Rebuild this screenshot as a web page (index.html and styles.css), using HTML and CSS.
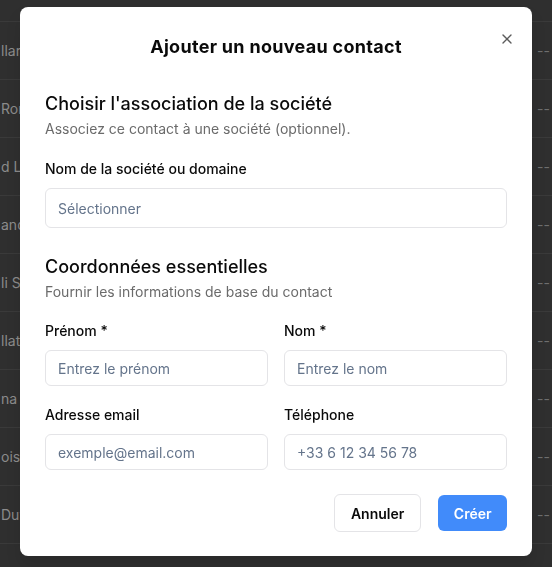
FILE: index.html
```html
<!DOCTYPE html>
<html lang="fr">
<head>
    <meta charset="UTF-8">
    <meta name="viewport" content="width=device-width, initial-scale=1.0">
    <title>Contacts</title>
    <link rel="stylesheet" href="styles.css">
</head>
<body>

    <!-- Contacts table behind the dialog -->
    <div class="table-bg">
        <div class="table-head"></div>
        <div class="table-row"><span class="cell-name">llar</span><span class="cell-empty">--</span></div>
        <div class="table-row"><span class="cell-name">Ror</span><span class="cell-empty">--</span></div>
        <div class="table-row"><span class="cell-name">d L</span><span class="cell-empty">--</span></div>
        <div class="table-row"><span class="cell-name">and</span><span class="cell-empty">--</span></div>
        <div class="table-row"><span class="cell-name">li S</span><span class="cell-empty">--</span></div>
        <div class="table-row"><span class="cell-name">llat</span><span class="cell-empty">--</span></div>
        <div class="table-row"><span class="cell-name">na C</span><span class="cell-empty">--</span></div>
        <div class="table-row"><span class="cell-name">ois</span><span class="cell-empty">--</span></div>
        <div class="table-row"><span class="cell-name">Duv</span><span class="cell-empty">--</span></div>
    </div>

    <div class="overlay">
        <div class="dialog">
            <button type="button" class="close-btn" aria-label="Fermer">
                <svg width="16" height="16" viewBox="0 0 24 24" fill="none" stroke="currentColor" stroke-width="2" stroke-linecap="round">
                    <path d="M18 6 6 18"/>
                    <path d="m6 6 12 12"/>
                </svg>
            </button>

            <h2 class="dialog-title">Ajouter un nouveau contact</h2>

            <div class="section">
                <h3>Choisir l'association de la société</h3>
                <p>Associez ce contact à une société (optionnel).</p>
            </div>

            <div class="field field-company">
                <label for="company">Nom de la société ou domaine</label>
                <div class="select" id="company">Sélectionner</div>
            </div>

            <div class="section section-details">
                <h3>Coordonnées essentielles</h3>
                <p>Fournir les informations de base du contact</p>
            </div>

            <div class="fields-grid">
                <div class="field">
                    <label for="firstName">Prénom *</label>
                    <input type="text" id="firstName" placeholder="Entrez le prénom">
                </div>
                <div class="field">
                    <label for="lastName">Nom *</label>
                    <input type="text" id="lastName" placeholder="Entrez le nom">
                </div>
                <div class="field">
                    <label for="email">Adresse email</label>
                    <input type="text" id="email" placeholder="exemple@email.com">
                </div>
                <div class="field">
                    <label for="phone">Téléphone</label>
                    <input type="text" id="phone" placeholder="+33 6 12 34 56 78">
                </div>
            </div>

            <div class="dialog-footer">
                <button type="button" class="btn btn-outline">Annuler</button>
                <button type="button" class="btn btn-primary">Créer</button>
            </div>
        </div>
    </div>

</body>
</html>
```

FILE: styles.css
```css
body {
    font-family: Inter, "Noto Sans", sans-serif;
    background-color: #2f2f2f;
    margin: 0;
    color: #0a0a0a;
}
.table-bg {
    height: 567px;
    overflow: hidden;
}
.table-head {
    height: 21px;
    border-bottom: 1px solid #3a3a3a;
}
.table-row {
    height: 57px;
    border-bottom: 1px solid #3a3a3a;
    display: flex;
    align-items: center;
    justify-content: space-between;
    padding: 0 2px 0 1px;
    font-size: 14px;
    color: #8b8b8b;
}
.cell-name {
    max-width: 19px;
    overflow: hidden;
    white-space: nowrap;
}
.cell-empty {
    color: #6e6e6e;
}
.overlay {
    position: fixed;
    inset: 0;
    display: flex;
    justify-content: center;
    align-items: flex-start;
    padding-top: 7px;
}
.dialog {
    position: relative;
    width: 512px;
    box-sizing: border-box;
    background: white;
    padding: 24px 25px;
    border-radius: 8px;
    box-shadow: 0px 10px 15px rgba(0, 0, 0, 0.1);
}
.close-btn {
    position: absolute;
    top: 24px;
    right: 17px;
    padding: 0;
    border: none;
    background: none;
    color: #3f3f3f;
    opacity: 0.85;
    cursor: pointer;
}
.dialog-title {
    margin: 0;
    font-size: 18px;
    line-height: 32px;
    font-weight: 700;
    text-align: center;
    letter-spacing: 0.3px;
}
.section {
    margin-top: 27px;
}
.section h3 {
    margin: 0;
    font-size: 18px;
    line-height: 28px;
    font-weight: 500;
}
.section p {
    margin: 1px 0 0;
    font-size: 14px;
    line-height: 20px;
    color: #6b6b6b;
}
.section-details {
    margin-top: 25px;
}
.field label {
    display: block;
    font-size: 14px;
    line-height: 20px;
    font-weight: 500;
    margin-bottom: 9px;
}
.field-company {
    margin-top: 20px;
}
.select, input[type="text"] {
    box-sizing: border-box;
    width: 100%;
    height: 36px;
    padding: 0 12px;
    border: 1px solid #e4e4e7;
    border-radius: 6px;
    font-family: inherit;
    font-size: 14px;
    color: #0a0a0a;
    background: white;
    outline: none;
}
.select {
    height: 40px;
    display: flex;
    align-items: center;
    color: #64748b;
}
input::placeholder {
    color: #64748b;
}
.fields-grid {
    margin-top: 19px;
    display: grid;
    grid-template-columns: 1fr 1fr;
    column-gap: 16px;
    row-gap: 19px;
}
.dialog-footer {
    margin-top: 24px;
    display: flex;
    justify-content: flex-end;
    align-items: center;
    gap: 17px;
}
.btn {
    font-family: inherit;
    font-size: 14px;
    font-weight: 600;
    padding: 0 16px;
    border-radius: 6px;
    cursor: pointer;
}
.btn-outline {
    height: 38px;
    background: white;
    color: #0a0a0a;
    border: 1px solid #e4e4e7;
}
.btn-primary {
    height: 36px;
    padding: 0 15.5px;
    background-color: #418bfa;
    color: white;
    border: none;
}
```
